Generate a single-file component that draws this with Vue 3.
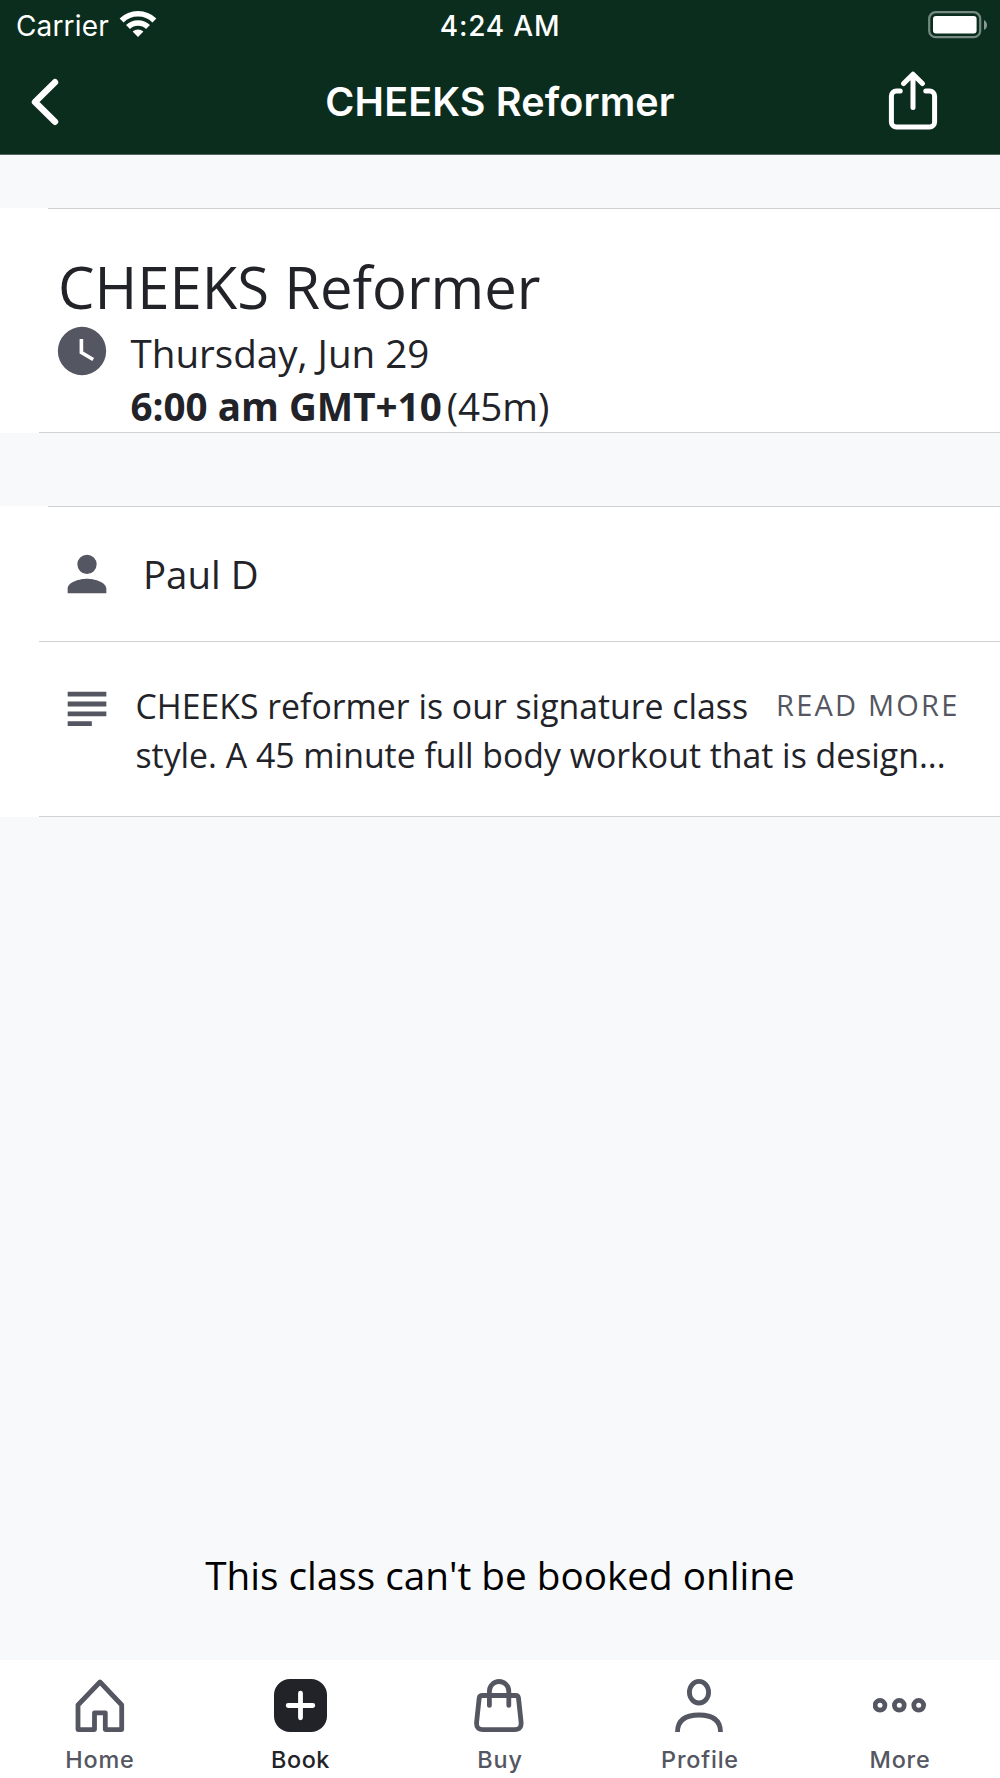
<template>
  <div class="screen">
    <header class="header">
      <div class="status">
        <div class="status__left">
          <span class="status__carrier">Carrier</span>
          <svg class="status__wifi" viewBox="0 0 38 28" aria-hidden="true">
            <path d="M2.6 10.4a23.4 23.4 0 0 1 32.8 0" />
            <path d="M9 17.1a14.2 14.2 0 0 1 20 0" />
            <path class="solid" d="M13.6 21.5a8 8 0 0 1 10.8 0L19 27z" />
          </svg>
        </div>
        <span class="status__time">4:24 AM</span>
        <svg class="status__battery" viewBox="0 0 60 28" aria-hidden="true">
          <rect class="shell" x="1.2" y="1.2" width="51" height="25" rx="6.5" />
          <rect class="level" x="5" y="5" width="43.6" height="17.6" rx="3" />
          <path class="tip" d="M56 9c4 2 4 8 0 10z" />
        </svg>
      </div>
      <div class="navbar">
        <button type="button" class="navbar__btn" aria-label="Back">
          <svg class="navbar__back" viewBox="0 0 28 48">
            <path d="M24 4.2 4 24l20 19.8" />
          </svg>
        </button>
        <h1 class="navbar__title">{{ session.name }}</h1>
        <button type="button" class="navbar__btn navbar__btn--end" aria-label="Share">
          <svg class="navbar__share" viewBox="0 0 50 60">
            <path d="M12.2 20H8.4a5 5 0 0 0-5 5v26a5 5 0 0 0 5 5h33.2a5 5 0 0 0 5-5V25a5 5 0 0 0-5-5h-3.8" />
            <path d="M25 36.6V3.2M15.6 12.6 25 3.2l9.4 9.4" />
          </svg>
        </button>
      </div>
    </header>

    <main class="content">
      <section class="card card--summary">
        <h2 class="summary__title">{{ session.name }}</h2>
        <div class="summary__when">
          <svg class="glyph glyph--clock" viewBox="0 0 24 24" aria-hidden="true">
            <path
              fill-rule="evenodd"
              d="M12 2a10 10 0 1 0 0 20 10 10 0 0 0 0-20zM12.5 7H11v6l5.25 3.15.75-1.23-4.5-2.67z"
            />
          </svg>
          <div class="summary__lines">
            <p class="summary__date">{{ session.date }}</p>
            <p class="summary__time">
              <strong>{{ session.time }}</strong>
              <span>({{ session.duration }})</span>
            </p>
          </div>
        </div>
      </section>

      <section class="card card--details">
        <div class="row row--staff">
          <svg class="glyph" viewBox="0 0 24 24" aria-hidden="true">
            <path d="M12 12a4 4 0 1 0 0-8 4 4 0 0 0 0 8zm0 2c-2.67 0-8 1.34-8 4v2h16v-2c0-2.66-5.33-4-8-4z" />
          </svg>
          <span class="row__name">{{ session.staff }}</span>
        </div>
        <div class="row row--about">
          <svg class="glyph" viewBox="0 0 24 24" aria-hidden="true">
            <path d="M4 4h16v2H4zM4 8.1h16v2H4zM4 12.2h16v2H4zM4 16.2h10v2H4z" />
          </svg>
          <div class="about">
            <div class="about__head">
              <span>{{ session.about[0] }}</span>
              <a class="about__more">READ MORE</a>
            </div>
            <p>{{ session.about[1] }}</p>
          </div>
        </div>
      </section>
    </main>

    <p class="notice">This class can't be booked online</p>

    <nav class="tabs">
      <a v-for="tab in tabs" :key="tab.id" class="tab" :class="{ 'is-active': tab.id === active }">
        <svg class="tab__icon" viewBox="0 0 54 54" aria-hidden="true">
          <path v-if="tab.id === 'home'" d="M5 26 27 3l21.7 23v24.6H32.3V33.8H21.5v16.8H5z" />
          <template v-else-if="tab.id === 'book'">
            <rect class="tab__tile" x="1" y="0" width="53" height="53" rx="16" />
            <path class="tab__plus" d="M27.5 14.2v24.6M15.2 26.5h24.6" />
          </template>
          <template v-else-if="tab.id === 'buy'">
            <path d="M9.4 16.5h33.2q2.6 0 2.9 2.6l2.6 24.2q.6 7.3-6.4 7.3H10q-7 0-6.4-7.3l2.6-24.2q.4-2.6 3.2-2.6z" />
            <path d="M16.4 26.4V12.2a9.7 9.7 0 0 1 19.4 0v14.2" />
          </template>
          <template v-else-if="tab.id === 'profile'">
            <ellipse cx="26" cy="13.2" rx="9.6" ry="10.8" />
            <path class="tab__butt" d="M4.5 53C4.5 41 13 36 26 36s21.5 5 21.5 17" />
          </template>
          <template v-else>
            <circle v-for="cx in [7, 26.3, 45.7]" :key="cx" :cx="cx" cy="26.3" r="4.9" />
          </template>
        </svg>
        <span class="tab__label">{{ tab.label }}</span>
      </a>
    </nav>
  </div>
</template>

<script setup>
import { ref } from 'vue'

const session = {
  name: 'CHEEKS Reformer',
  date: 'Thursday, Jun 29',
  time: '6:00 am GMT+10',
  duration: '45m',
  staff: 'Paul D',
  about: [
    'CHEEKS reformer is our signature class',
    'style. A 45 minute full body workout that is design...',
  ],
}

const tabs = [
  { id: 'home', label: 'Home' },
  { id: 'book', label: 'Book' },
  { id: 'buy', label: 'Buy' },
  { id: 'profile', label: 'Profile' },
  { id: 'more', label: 'More' },
]

const active = ref('book')
</script>

<style>
body {
  background: #f8f9fb;
}
</style>

<style scoped>
.screen {
  display: flex;
  flex-direction: column;
  width: 100%;
  height: 1778px;
  overflow: hidden;
  background: #f8f9fb;
  color: #222328;
  font-family: 'Open Sans', 'Noto Sans', sans-serif;
}

h1,
h2,
p {
  margin: 0;
  font-weight: 400;
}

.header {
  flex: none;
  height: 154px;
  border-bottom: 1px solid #53675e;
  background: #0b2d1e;
  color: #fff;
  font-family: Inter, Roboto, sans-serif;
}

.status {
  display: grid;
  grid-template-columns: 1fr auto 1fr;
  align-items: center;
  height: 50px;
  padding: 0 12px 0 16px;
}

.status__left {
  display: flex;
  align-items: center;
  gap: 10px;
}

.status__carrier {
  padding-top: 1px;
  font-size: 28px;
  letter-spacing: 0.15px;
}

.status__wifi {
  width: 38px;
  height: 28px;
  margin-bottom: 2px;
  fill: none;
  stroke: #fff;
  stroke-width: 5.6;
}

.status__wifi .solid {
  fill: #fff;
  stroke: none;
}

.status__time {
  padding: 1px 4px 0 0;
  font-size: 28px;
  font-weight: 500;
  letter-spacing: 0.8px;
}

.status__battery {
  justify-self: end;
  width: 60px;
  height: 28px;
  margin-bottom: 1px;
}

.shell {
  fill: none;
  stroke: #768a81;
  stroke-width: 2.2;
}

.level {
  fill: #fff;
}

.tip {
  fill: #8c9c94;
}

.navbar {
  display: grid;
  grid-template-columns: 150px 1fr 150px;
  align-items: center;
  height: 104px;
}

.navbar__btn {
  display: flex;
  padding: 0 0 0 31px;
  border: none;
  background: none;
}

.navbar__btn--end {
  justify-content: flex-end;
  padding: 0 62px 2px 0;
}

.navbar__back,
.navbar__share {
  fill: none;
  stroke: #fff;
  stroke-linecap: round;
  stroke-linejoin: round;
}

.navbar__back {
  width: 28px;
  height: 48px;
  stroke-width: 6.4;
}

.navbar__share {
  width: 50px;
  height: 60px;
  stroke-width: 5;
}

.navbar__title {
  text-align: center;
  font-size: 39.5px;
  font-weight: 590;
  letter-spacing: 0.15px;
  white-space: nowrap;
}

.content {
  flex: 1;
  padding-top: 53px;
}

/* hairlines start at different insets, so they are painted as backgrounds */
.card {
  background:
    linear-gradient(#d0d1d3, #d0d1d3) 48px 0 / 100% 1px no-repeat,
    linear-gradient(#d0d1d3, #d0d1d3) 39px 100% / 100% 1px no-repeat,
    #fff;
}

.card--summary {
  height: 225px;
  padding: 39px 58px 0;
  box-sizing: border-box;
}

.card--details {
  margin-top: 73px;
}

.summary__title {
  font-size: 58px;
  line-height: 80px;
}

.summary__when {
  display: flex;
}

.glyph {
  flex: none;
  width: 58px;
  height: 58px;
  fill: #545661;
}

.glyph--clock {
  margin: -5.5px 19.5px 0 -5px;
}

.summary__lines {
  font-size: 38.6px;
  line-height: 53.3px;
}

.summary__time {
  display: flex;
  gap: 5px;
}

.row {
  display: flex;
  padding: 0 38px 0 58px;
}

.row--staff {
  align-items: center;
  gap: 27px;
  height: 136px;
  background: linear-gradient(#d0d1d3, #d0d1d3) 39px 100% / 100% 1px no-repeat;
}

.row__name {
  font-size: 38.4px;
}

.row--about {
  gap: 19.5px;
  height: 175px;
  padding-top: 40.4px;
  box-sizing: border-box;
}

.about {
  flex: 1;
  font-size: 33.8px;
  line-height: 48.3px;
  white-space: nowrap;
}

.about__head {
  display: flex;
  justify-content: space-between;
  padding-right: 2.5px;
}

.about__more {
  margin-top: -1px;
  color: #545661;
  font-size: 29px;
  letter-spacing: 2.2px;
}

.notice {
  flex: none;
  height: 170px;
  color: #000;
  font-size: 38.7px;
  line-height: 170px;
  text-align: center;
}

.tabs {
  flex: none;
  display: grid;
  grid-template-columns: repeat(5, 1fr);
  height: 118px;
  background: #fff;
  font-family: Inter, Roboto, sans-serif;
}

.tab {
  display: flex;
  flex-direction: column;
  align-items: center;
  padding-top: 19px;
  color: #545661;
}

.tab.is-active {
  color: #222328;
}

.tab__icon {
  width: 54px;
  height: 54px;
  fill: none;
  stroke: currentColor;
  stroke-width: 4.8;
  stroke-linecap: round;
  stroke-linejoin: round;
}

.tab__tile {
  fill: currentColor;
  stroke: none;
}

.tab__plus {
  stroke: #fff;
}

.tab__butt {
  stroke-linecap: butt;
}

.tab__label {
  margin-top: 13px;
  font-size: 23.4px;
  font-weight: 450;
  line-height: 28px;
  letter-spacing: 0.8px;
}

.is-active .tab__label {
  padding-left: 1px;
  font-weight: 500;
  letter-spacing: 0.6px;
}
</style>
